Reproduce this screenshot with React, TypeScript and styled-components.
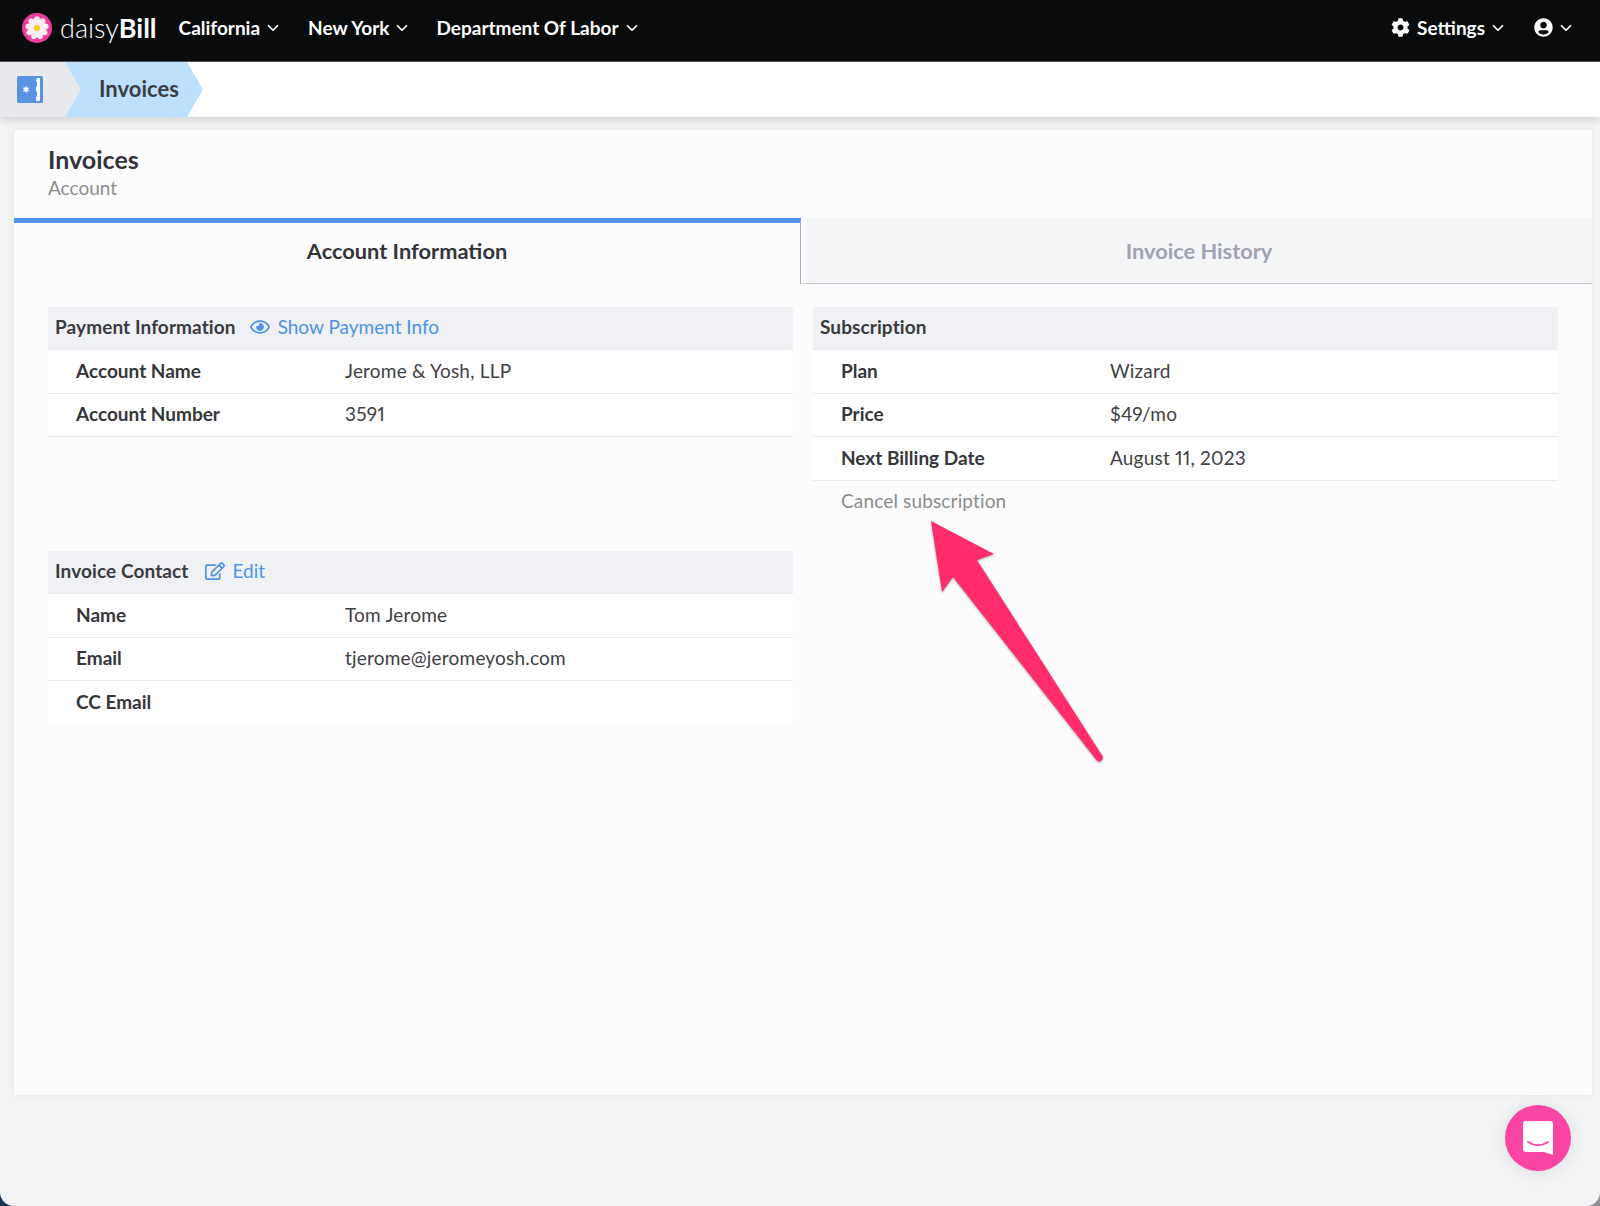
import styled, { createGlobalStyle } from "styled-components";
import { FaCog, FaUserCircle, FaRegEye, FaRegEdit } from "react-icons/fa";
import { ChevronDown } from "lucide-react";

const GlobalStyle = createGlobalStyle`
  html, body {
    margin: 0;
    padding: 0;
    height: 1206px;
    overflow: hidden;
    background: linear-gradient(90deg, #15365a 50%, #8f9094 50%);
  }
  body {
    font-family: "Lato", "Liberation Sans", sans-serif;
    font-variant-numeric: proportional-nums;
    color: #33343a;
  }
`;

const Page = styled.div`
  position: relative;
  height: 1206px;
  background: #f3f4f6;
  border-radius: 0 0 14px 14px;
  overflow: hidden;
`;

const NavBar = styled.header`
  height: 62px;
  box-sizing: border-box;
  background: #0a0b0c;
  border-bottom: 1px solid #55565a;
  display: flex;
  align-items: center;
  padding: 0 25px 6px 22px;
  color: #fff;
`;

const Logo = styled.div`
  display: flex;
  align-items: center;
  gap: 8px;
  margin-right: 22px;
`;

const LogoText = styled.span`
  font-size: 27px;
  font-weight: 300;
  b {
    font-weight: 700;
  }
`;

const NavItem = styled.div<{ $gap?: number }>`
  display: flex;
  align-items: center;
  gap: 4px;
  font-size: 19px;
  font-weight: 700;
  margin-right: ${(p) => p.$gap ?? 0}px;
`;

const NavIcon = styled.span`
  display: flex;
  margin-right: 3px;
`;

const Spacer = styled.div`
  flex: 1;
`;

const CrumbBar = styled.nav`
  height: 55px;
  background: #fff;
  display: flex;
  box-shadow: 0 3px 8px rgba(0, 0, 0, 0.14);
  position: relative;
`;

const HomeCrumb = styled.div`
  width: 81px;
  background: #e8e9ed;
  clip-path: polygon(0 0, 65px 0, 81px 50%, 65px 100%, 0 100%);
  display: flex;
  align-items: center;
  padding-left: 17px;
  box-sizing: border-box;
  position: relative;
  z-index: 1;
`;

const ActiveCrumb = styled.div`
  margin-left: -16px;
  width: 138px;
  background: #bce0fd;
  clip-path: polygon(0 0, 122px 0, 138px 50%, 122px 100%, 0 100%);
  display: flex;
  align-items: center;
  padding: 0 0 2px 34px;
  box-sizing: border-box;
  font-size: 22px;
  font-weight: 700;
  color: #3b3c45;
`;

const Main = styled.main`
  padding: 13px 8px 0 14px;
`;

const Card = styled.section`
  height: 965px;
  background: #fcfcfc;
  box-shadow: 0 0 6px rgba(0, 0, 0, 0.07);
`;

const CardHead = styled.div`
  height: 88px;
  box-sizing: border-box;
  padding: 14px 34px 0;
`;

const CardTitle = styled.div`
  font-size: 25px;
  font-weight: 700;
  line-height: 30px;
  color: #33343a;
`;

const CardSub = styled.div`
  font-size: 19px;
  line-height: 28px;
  color: #8e8e8e;
`;

const Tabs = styled.div`
  display: grid;
  grid-template-columns: 787px 1fr;
  height: 66px;
`;

const Tab = styled.div<{ $active?: boolean }>`
  display: flex;
  align-items: center;
  justify-content: center;
  font-size: 21.8px;
  font-weight: 700;
  box-sizing: border-box;
  ${(p) =>
    p.$active
      ? `
    border-top: 5px solid #4f94e8;
    border-right: 1px solid #a9abbd;
    color: #33343a;
    padding-bottom: 6px;
  `
      : `
    border-left: 5px solid #fcfcfc;
    border-bottom: 1px solid #c3c4d0;
    background: #f4f5f7;
    color: #a0a2b2;
    padding-bottom: 1px;
  `}
`;

const Panels = styled.div`
  display: grid;
  grid-template-columns: 745px 745px;
  column-gap: 20px;
  padding: 23px 34px 0;
`;

const Column = styled.div`
  display: flex;
  flex-direction: column;
`;

const Block = styled.div<{ $minHeight?: number }>`
  min-height: ${(p) => p.$minHeight ?? 0}px;
`;

const BlockHead = styled.div`
  height: 43px;
  box-sizing: border-box;
  background: #eff1f5;
  border-bottom: 1px solid #e8eaee;
  display: flex;
  align-items: center;
  padding: 0 0 3px 7px;
  font-size: 19px;
  font-weight: 700;
  letter-spacing: 0.1px;
  color: #3a3b40;
`;

const HeadLink = styled.span<{ $left: number }>`
  display: flex;
  align-items: center;
  gap: 8px;
  margin-left: ${(p) => p.$left}px;
  font-weight: 400;
  letter-spacing: 0;
  color: #4f94e8;
  svg {
    font-size: 20px;
  }
`;

const Row = styled.div<{ $last?: boolean }>`
  height: 43.5px;
  box-sizing: border-box;
  background: #fff;
  border-bottom: 1px solid ${(p) => (p.$last ? "#fcfcfc" : "#e9eaec")};
  display: grid;
  grid-template-columns: 269px 1fr;
  align-items: center;
  padding: 0 0 2px 28px;
  font-size: 19px;
`;

const RowLabel = styled.span`
  font-weight: 700;
  color: #35363a;
`;

const RowValue = styled.span`
  letter-spacing: 0.2px;
  color: #3f4044;
`;

const CancelLink = styled.div`
  padding: 7px 0 0 28px;
  font-size: 19px;
  line-height: 26px;
  letter-spacing: 0.15px;
  color: #8c8c8c;
`;

const ArrowMark = styled.svg`
  position: absolute;
  left: 920px;
  top: 510px;
  filter: drop-shadow(0 1px 1px rgba(0, 0, 0, 0.35));
`;

const ChatButton = styled.div`
  position: absolute;
  left: 1505px;
  top: 1105px;
  width: 66px;
  height: 66px;
  border-radius: 50%;
  background: #fb45a4;
  box-shadow: 0 1px 18px rgba(0, 0, 0, 0.1);
  display: flex;
  align-items: center;
  justify-content: center;
`;

function DaisyLogo() {
  const petals = [0, 40, 80, 120, 160, 200, 240, 280, 320];
  return (
    <svg width={30} height={30} viewBox="0 0 30 30">
      <circle cx={15} cy={15} r={15} fill="#ee3b9c" />
      {petals.map((a) => (
        <ellipse key={a} cx={15} cy={7.8} rx={3.1} ry={4.6} fill="#fdeef6" transform={`rotate(${a} 15 15)`} />
      ))}
      <circle cx={15} cy={15} r={3} fill="#f8d21f" />
    </svg>
  );
}

function FolderIcon() {
  return (
    <svg width={26} height={27} viewBox="0 0 26 27">
      <rect width={26} height={27} rx={1.5} fill="#5a93e4" />
      <path d="M20 2h3v23h-4v-4l1-1v-4l-1-1v-4l1-1V6l-1-1z" fill="#f2f6fd" />
      <path d="M9 10.5v6M6.4 12l5.2 3M11.6 12l-5.2 3" stroke="#fff" strokeWidth={1.5} />
    </svg>
  );
}

function Chevron() {
  return <ChevronDown size={18} strokeWidth={2.3} />;
}

function InfoRow({ label, value, last }: { label: string; value?: string; last?: boolean }) {
  return (
    <Row $last={last}>
      <RowLabel>{label}</RowLabel>
      <RowValue>{value}</RowValue>
    </Row>
  );
}

export default function App() {
  return (
    <Page>
      <GlobalStyle />
      <NavBar>
        <Logo>
          <DaisyLogo />
          <LogoText>
            daisy<b>Bill</b>
          </LogoText>
        </Logo>
        <NavItem $gap={26}>
          California <Chevron />
        </NavItem>
        <NavItem $gap={25}>
          New York <Chevron />
        </NavItem>
        <NavItem>
          Department Of Labor <Chevron />
        </NavItem>
        <Spacer />
        <NavItem $gap={27}>
          <NavIcon>
            <FaCog size={19} />
          </NavIcon>
          Settings <Chevron />
        </NavItem>
        <NavItem>
          <FaUserCircle size={19} />
          <Chevron />
        </NavItem>
      </NavBar>
      <CrumbBar>
        <HomeCrumb>
          <FolderIcon />
        </HomeCrumb>
        <ActiveCrumb>Invoices</ActiveCrumb>
      </CrumbBar>
      <Main>
        <Card>
          <CardHead>
            <CardTitle>Invoices</CardTitle>
            <CardSub>Account</CardSub>
          </CardHead>
          <Tabs>
            <Tab $active>Account Information</Tab>
            <Tab>Invoice History</Tab>
          </Tabs>
          <Panels>
            <Column>
              <Block $minHeight={244}>
                <BlockHead>
                  Payment Information
                  <HeadLink $left={14}>
                    <FaRegEye /> Show Payment Info
                  </HeadLink>
                </BlockHead>
                <InfoRow label="Account Name" value="Jerome & Yosh, LLP" />
                <InfoRow label="Account Number" value="3591" />
              </Block>
              <Block>
                <BlockHead>
                  Invoice Contact
                  <HeadLink $left={16}>
                    <FaRegEdit /> Edit
                  </HeadLink>
                </BlockHead>
                <InfoRow label="Name" value="Tom Jerome" />
                <InfoRow label="Email" value="tjerome@jeromeyosh.com" />
                <InfoRow label="CC Email" last />
              </Block>
            </Column>
            <Column>
              <Block>
                <BlockHead>Subscription</BlockHead>
                <InfoRow label="Plan" value="Wizard" />
                <InfoRow label="Price" value="$49/mo" />
                <InfoRow label="Next Billing Date" value="August 11, 2023" />
                <CancelLink>Cancel subscription</CancelLink>
              </Block>
            </Column>
          </Panels>
        </Card>
      </Main>
      <ArrowMark width={190} height={260} viewBox="920 510 190 260">
        <path
          d="M931 521L994 554L977 560L1102.5 756Q1103.5 759 1101 761Q1098.5 762.5 1096.5 760L953 577L942 592Z"
          fill="#ff2d6b"
        />
      </ArrowMark>
      <ChatButton>
        <svg width={30} height={34} viewBox="0 0 30 34">
          <path d="M3 0h24a3 3 0 0 1 3 3v31l-9-3H3a3 3 0 0 1-3-3V3a3 3 0 0 1 3-3z" fill="#fff" />
          <path d="M5 21q10 6.5 20 0" fill="none" stroke="#fb45a4" strokeWidth={1.8} strokeLinecap="round" />
        </svg>
      </ChatButton>
    </Page>
  );
}
